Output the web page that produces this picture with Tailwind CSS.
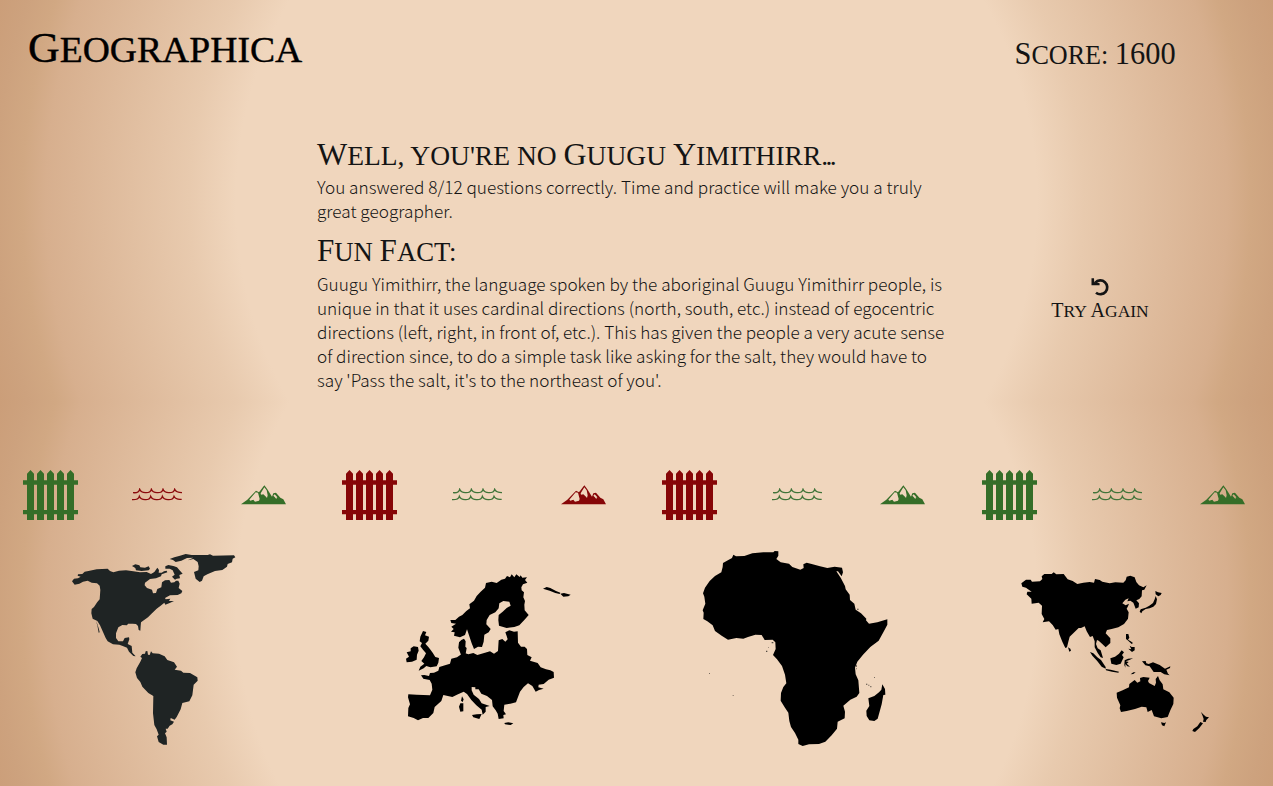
<!DOCTYPE html>
<html lang="en">
<head>
<meta charset="utf-8">
<title>Geographica</title>
<script src="https://cdn.jsdelivr.net/npm/@tailwindcss/browser@4"></script>
</head>
<body class="h-[786px] overflow-hidden text-[#141414] bg-[radial-gradient(circle_at_center,#f0d6bd_60%,#e8caae_67%,#d7af8e_88.5%,#d1a883_92%,#cda27e_96%,#cb9e79_100%)] bg-[length:100%_402px]">
<svg class="hidden">
  <symbol id="fence" viewBox="0 0 165 150">
    <path d="M12 150V11L22.500 0 33 11V150ZM42 150V11L52.500 0 63 11V150ZM72 150V11L82.500 0 93 11V150ZM102 150V11L112.500 0 123 11V150ZM132 150V11L142.500 0 153 11V150ZM0 31H165V44H0ZM0 120H165V133H0Z"/>
  </symbol>
  <symbol id="waves" viewBox="0 0 150 39">
    <path fill="none" stroke="currentColor" stroke-width="4" d="M3 14Q20 16 23 4Q27 14 40 14Q55 15 58 4Q62 14 75 14Q90 15 93 4Q97 14 110 14Q125 15 128 4Q132 14 150 14M0 35Q19 36 22 25Q26 35 39 35Q53 36 56 25Q60 35 73 35Q88 36 91 25Q95 35 108 35Q123 36 126 25Q131 36 149 34"/>
  </symbol>
  <symbol id="peaks" viewBox="0 0 135 60">
    <path fill-rule="evenodd" d="M0 58L19 44 45 17 54 22 70 1 78 11 93 35 97 25 105 23 118 38 127 43 135 58ZM44 22L25 44 28 47 37 44 42 50 54 47 56 42 51 23ZM70 7L59 25 60 29 67 28 75 35 78 39 80 31 77 16ZM101 28L97 32 101 36 106 42 108 36 114 42Z"/>
  </symbol>
</svg>

<header class="flex h-[125px] items-start justify-between pl-[28px] pr-[97px] font-['Liberation_Serif',serif]">
  <h1 class="mt-[27px] origin-left scale-x-[1.045] text-[36px] leading-[42px] whitespace-nowrap text-black uppercase [-webkit-text-stroke:0.4px_#000]"><span class="text-[42px]">G</span>eographica</h1>
  <p class="mt-[34px] origin-right scale-x-[0.95] text-[27.500px] leading-[38px] whitespace-nowrap uppercase"><span class="text-[32px]">S</span>core: <span class="text-[32px]">1600</span></p>
</header>

<main class="flex h-[345px]">
  <section class="ml-[317px] w-[640px] pt-[11px]">
    <h2 class="w-max text-[27.500px] leading-[36px] whitespace-nowrap uppercase font-['Liberation_Serif',serif]"><span class="text-[32px]">W</span>ell, you're no <span class="text-[32px]">G</span>uugu <span class="text-[32px]">Y</span>imithirr<span class="tracking-[-2.700px]">...</span></h2>
    <p class="mt-[1px] font-light text-[17.200px] leading-[24px] whitespace-nowrap font-['Noto_Sans_CJK_SC',sans-serif]">You answered 8/12 questions correctly. Time and practice will make you a truly<br>great geographer.</p>
    <h2 class="mt-[9px] w-max origin-left scale-x-[0.972] text-[27.500px] leading-[36px] whitespace-nowrap uppercase font-['Liberation_Serif',serif]"><span class="text-[32px]">F</span>un <span class="text-[32px]">F</span>act:</h2>
    <p class="mt-[2px] font-light text-[17.170px] leading-[24px] whitespace-nowrap font-['Noto_Sans_CJK_SC',sans-serif]">Guugu Yimithirr, the language spoken by the aboriginal Guugu Yimithirr people, is<br>unique in that it uses cardinal directions (north, south, etc.) instead of egocentric<br>directions (left, right, in front of, etc.). This has given the people a very acute sense<br>of direction since, to do a simple task like asking for the salt, they would have to<br>say 'Pass the salt, it's to the northeast of you'.</p>
  </section>
  <button class="ml-[63px] mt-[152px] flex h-[46px] w-[160px] flex-col items-center font-['Liberation_Serif',serif]">
    <svg class="h-[20px] w-[18px]" viewBox="0 0 18 20"><path fill="none" stroke="currentColor" stroke-width="2.700" d="M4.300 5.600A6.900 6.900 0 1 1 5 15.700"/><path fill="currentColor" d="M.5 1.300L3 1.200 3.200 4.900 8.600 6.200V8.300H.5Z"/></svg>
    <span class="mt-[2px] block text-[17.500px] leading-[22px] whitespace-nowrap uppercase"><span class="text-[20px]">T</span>ry <span class="text-[20px]">A</span>gain</span>
  </button>
</main>

<div class="-ml-[3px] grid w-[1280px] grid-cols-4">
  <section>
    <div class="flex h-[50px] items-start">
      <svg class="ml-[26px] h-[50px] w-[55px] fill-[#356e28]"><use href="#fence"/></svg>
      <svg class="ml-[54px] mt-[18px] h-[13px] w-[50px] text-[#8b0a0c]"><use href="#waves"/></svg>
      <svg class="ml-[59px] mt-[15px] h-[20px] w-[45px] fill-[#356e28]"><use href="#peaks"/></svg>
    </div>
    <svg class="mt-[20px] h-[220px] w-[320px] fill-[#1f2424]" viewBox="-159 0 960 660">
      <path d="M66 124L72 116 84 115 92 110 83 107 84 103 97 102 104 95 119 92 140 88 173 86 180 93 190 97 207 92 228 91 250 94 270 97 290 96 303 102 313 96 322 83 327 90 326 98 335 98 342 94 350 92 352 97 335 103 333 109 318 115 300 117 285 128 284 136 291 144 306 149 309 160 318 159 322 147 334 142 336 127 345 121 358 120 363 128 373 127 378 122 385 122 389 131 386 144 397 153 394 160 383 165 360 166 345 174 347 178 361 176 357 183 372 183 359 189 346 194 343 188 331 198 320 206 306 220 294 232 273 247 272 258 271 272 266 270 264 258 258 252 248 251 234 251 231 256 217 255 205 262 198 280 198 294 205 304 219 304 224 294 237 292 238 298 233 312 245 318 247 338 257 349 250 348 237 335 231 323 220 319 208 314 189 313 173 304 167 294 159 276 150 256 142 243 128 236 124 220 125 207 132 201 142 186 149 178 151 150 149 137 141 130 125 128 113 122 99 125 88 131 74 134Z"/>
      <path d="M138 243L142 256 146 278 149 277 146 265 142 252ZM246 78L256 73 268 76 271 82 285 83 296 79 300 86 296 91 275 93 258 91 256 84ZM346 79L355 75 370 78 381 82 390 92 398 101 388 105 390 115 380 116 375 119 366 110 374 104 368 91 359 86 346 86ZM359 57L373 52 390 47 407 42 425 45 473 45 480 43 489 47 552 46 556 52 548 56 546 67 533 72 531 80 517 90 495 93 472 103 461 109 456 122 449 126 437 116 432 96 445 91 446 79 443 66 430 57 413 61 430 53 411 54 394 62 377 66 369 60Z"/>
      <path d="M292 333L294 344 299 345 303 334 308 340 327 341 344 349 352 360 372 367 381 380 374 389 393 392 400 398 420 399 442 412 443 422 431 434 427 466 418 484 397 489 392 508 380 531 374 539 362 534 361 541 372 545 367 553 359 557 353 566 347 566 350 575 345 580 350 592 351 614 340 614 326 606 321 589 326 584 320 568 313 555 309 520 310 468 295 459 277 440 271 426 261 414 256 397 260 385 271 365 276 354 271 350 277 342 285 341 287 334Z"/>
    </svg>
  </section>
  <section>
    <div class="flex h-[50px] items-start">
      <svg class="ml-[25px] h-[50px] w-[55px] fill-[#860607]"><use href="#fence"/></svg>
      <svg class="ml-[55px] mt-[18px] h-[13px] w-[50px] text-[#41743a]"><use href="#waves"/></svg>
      <svg class="ml-[59px] mt-[15px] h-[20px] w-[45px] fill-[#860607]"><use href="#peaks"/></svg>
    </div>
    <svg class="mt-[20px] h-[220px] w-[320px] fill-black" viewBox="-219 -60 960 660">
      <path d="M181 180L196 180 207 170 217 165 229 153 240 145 238 133 252 122 260 108 272 95 285 83 288 69 305 65 320 69 334 59 345 56 351 48 360 52 365 43 373 52 379 43 389 51 392 46 397 53 411 52 405 60 412 68 399 73 394 82 395 91 402 97 400 112 405 123 403 134 404 151 416 165 405 178 388 196 373 201 350 204 327 197 325 180 326 165 338 155 350 144 362 137 358 125 340 123 328 130 326 145 316 157 299 165 290 180 289 193 302 207 296 217 283 224 281 245 276 261 264 260 252 267 245 250 235 220 231 208 225 225 210 232 192 227 194 217 183 215 191 207 184 200 198 191 184 189Z"/>
      <path d="M207 247L214 240 222 236 227 244 226 260 230 264 227 281 214 287 209 274 205 263ZM91 230L99 213 109 216 105 226 117 230 115 242 106 251 115 261 122 270 128 278 136 291 147 294 145 308 140 319 121 322 109 318 101 325 86 332 91 320 103 311 94 303 102 292 108 280 99 269 91 259 96 249 89 244ZM62 265L71 259 84 261 86 272 81 284 80 299 66 305 50 307 48 296 57 290 50 277 62 274ZM216 409L221 418 218 426 213 422ZM211 430L220 430 220 454 211 455 207 440ZM246 465L260 463 275 462 268 477 250 472ZM343 489L355 487 370 490 362 495 345 493ZM459 86L470 81 481 84 498 93 511 98 509 102 496 99 479 92ZM511 101L522 99 542 104 535 109 520 110Z"/>
      <path d="M93 346L103 345 117 348 120 339 132 338 145 332 148 321 165 316 180 311 184 296 201 292 214 283 226 280 235 283 250 279 262 285 285 278 300 274 312 281 324 273 326 241 337 237 346 245 353 238 350 228 346 217 358 211 372 215 383 214 384 248 393 260 404 260 411 267 412 285 425 292 420 302 443 309 452 322 468 328 481 331 491 336 492 353 476 359 461 372 446 374 445 382 461 386 447 390 437 395 427 378 414 370 401 381 390 395 384 411 378 427 361 431 343 434 341 453 348 463 340 465 341 475 326 477 323 461 317 451 308 439 306 420 291 408 274 401 266 388 256 388 256 382 245 381 245 391 251 404 267 417 275 430 299 438 287 441 287 455 278 464 275 449 259 436 244 420 231 402 221 395 204 403 187 411 160 405 154 423 134 441 130 459 115 474 99 474 84 481 71 474 54 469 55 444 60 433 54 412 55 403 80 404 120 406 127 389 125 371 119 360 100 356Z"/>
    </svg>
  </section>
  <section>
    <div class="flex h-[50px] items-start">
      <svg class="ml-[25px] h-[50px] w-[55px] fill-[#860607]"><use href="#fence"/></svg>
      <svg class="ml-[55px] mt-[18px] h-[13px] w-[50px] text-[#41743a]"><use href="#waves"/></svg>
      <svg class="ml-[58px] mt-[15px] h-[20px] w-[45px] fill-[#356e28]"><use href="#peaks"/></svg>
    </div>
    <svg class="mt-[20px] h-[220px] w-[320px] fill-black" viewBox="-159 0 960 660">
      <path d="M130 44L138 49 163 48 187 40 220 37 250 37 254 33 265 34 265 47 259 57 272 67 297 71 307 81 331 89 341 84 340 73 350 68 365 72 390 79 412 84 434 80 456 83 459 97 455 109 444 94 439 94 452 113 465 138 467 148 479 164 480 180 493 191 497 209 513 220 529 236 528 241 537 251 562 247 592 238 592 254 580 277 566 302 541 321 519 344 502 365 495 383 497 403 505 421 508 459 500 470 481 479 460 497 465 515 464 535 443 545 441 566 425 586 406 605 387 612 357 613 338 618 325 612 325 599 315 579 303 561 298 543 295 518 284 502 272 482 273 459 280 441 289 430 285 404 276 378 261 358 249 345 257 327 256 307 248 299 224 300 215 285 196 284 174 291 160 296 139 294 114 299 95 287 75 273 68 256 52 244 40 237 41 218 38 211 46 191 43 170 39 160 45 143 59 123 75 108 94 97 98 81 99 69 115 60 126 54Z"/>
      <path d="M577 433L585 447 586 464 580 465 575 493 563 536 553 543 538 541 530 528 529 512 538 498 535 475 553 468 567 457 574 449Z"/>
      <path d="M245 306h5v4h-5zM228 332h4v4h-4zM235 322h2v2h-2zM498 376h3v4h-3zM499 385h2v3h-2zM528 431h4v3h-4zM535 434h3v3h-3zM541 438h3v4h-3zM552 411h3v2h-3zM128 465h3v2h-3zM57 400h3v2h-3zM501 206h5v3h-5z" opacity=".65"/>
    </svg>
  </section>
  <section>
    <div class="flex h-[50px] items-start">
      <svg class="ml-[25px] h-[50px] w-[55px] fill-[#356e28]"><use href="#fence"/></svg>
      <svg class="ml-[55px] mt-[18px] h-[13px] w-[50px] text-[#41743a]"><use href="#waves"/></svg>
      <svg class="ml-[58px] mt-[15px] h-[20px] w-[45px] fill-[#356e28]"><use href="#peaks"/></svg>
    </div>
    <svg class="mt-[20px] h-[220px] w-[320px] fill-black" viewBox="-159 -60 960 660">
      <path d="M34 70L48 59 62 59 66 65 90 64 97 57 95 49 103 42 125 42 131 37 139 43 161 42 173 58 188 63 202 72 220 68 239 66 252 68 255 57 269 60 277 65 299 70 316 67 340 68 347 61 350 50 361 47 374 52 379 66 387 76 400 82 410 76 403 89 396 91 395 109 388 117 379 121 387 130 386 142 377 146 373 136 370 128 361 122 352 124 356 115 346 119 337 130 347 136 357 131 354 139 350 146 356 157 354 176 342 192 325 202 305 207 291 210 287 220 301 235 301 249 287 262 276 251 266 242 261 240 258 252 263 265 272 271 279 294 272 292 263 279 254 262 254 244 248 228 240 231 230 214 224 199 213 204 206 204 179 230 175 245 171 262 166 264 157 245 148 223 145 207 137 209 128 195 117 184 98 187 103 177 95 162 96 137 86 128 65 131 64 116 50 103 52 95 65 95 53 87 48 83 37 80Z"/>
      <path d="M174 262L181 266 183 272 178 275ZM240 276L250 280 262 292 273 300 287 321 287 326 275 320 261 302 247 287ZM287 327L302 329 327 335 325 338 306 335 288 331ZM301 295L315 290 327 281 335 271 342 277 336 285 341 292 332 311 319 315 304 311ZM344 301L354 296 369 295 358 300 347 304 356 306 350 311 360 320 352 319 346 312 346 323 343 315ZM362 343L370 337 377 337 370 342ZM348 222L355 222 358 233 354 239 362 244 369 249 365 252 353 241 348 237ZM359 257L365 261 374 261 374 271 366 276 355 266 364 268ZM396 304L407 303 409 310 416 312 429 307 449 315 465 326 481 319 480 324 469 329 474 341 479 346 463 343 452 336 431 336 419 319 406 316ZM436 93L444 97 455 99 452 105 445 109 437 103ZM437 108L441 118 438 132 430 140 419 145 407 147 397 154 394 160 389 155 392 148 407 143 418 137 429 129 434 118ZM453 487L463 489 468 487 463 499 456 496ZM573 456L581 464 588 470 597 472 589 480 587 486 579 485 581 477 578 468ZM571 486L579 490 568 504 555 516 547 513 550 507 562 499Z"/>
      <path d="M320 398L338 391 357 382 358 372 374 360 382 368 391 364 390 354 400 351 419 353 414 363 417 369 434 378 438 368 437 357 444 348 449 361 458 373 460 388 478 397 491 413 490 432 481 451 473 471 454 475 432 469 425 450 413 456 409 442 395 440 375 447 350 453 333 456 329 445 331 436 321 413Z"/>
    </svg>
  </section>
</div>
</body>
</html>
